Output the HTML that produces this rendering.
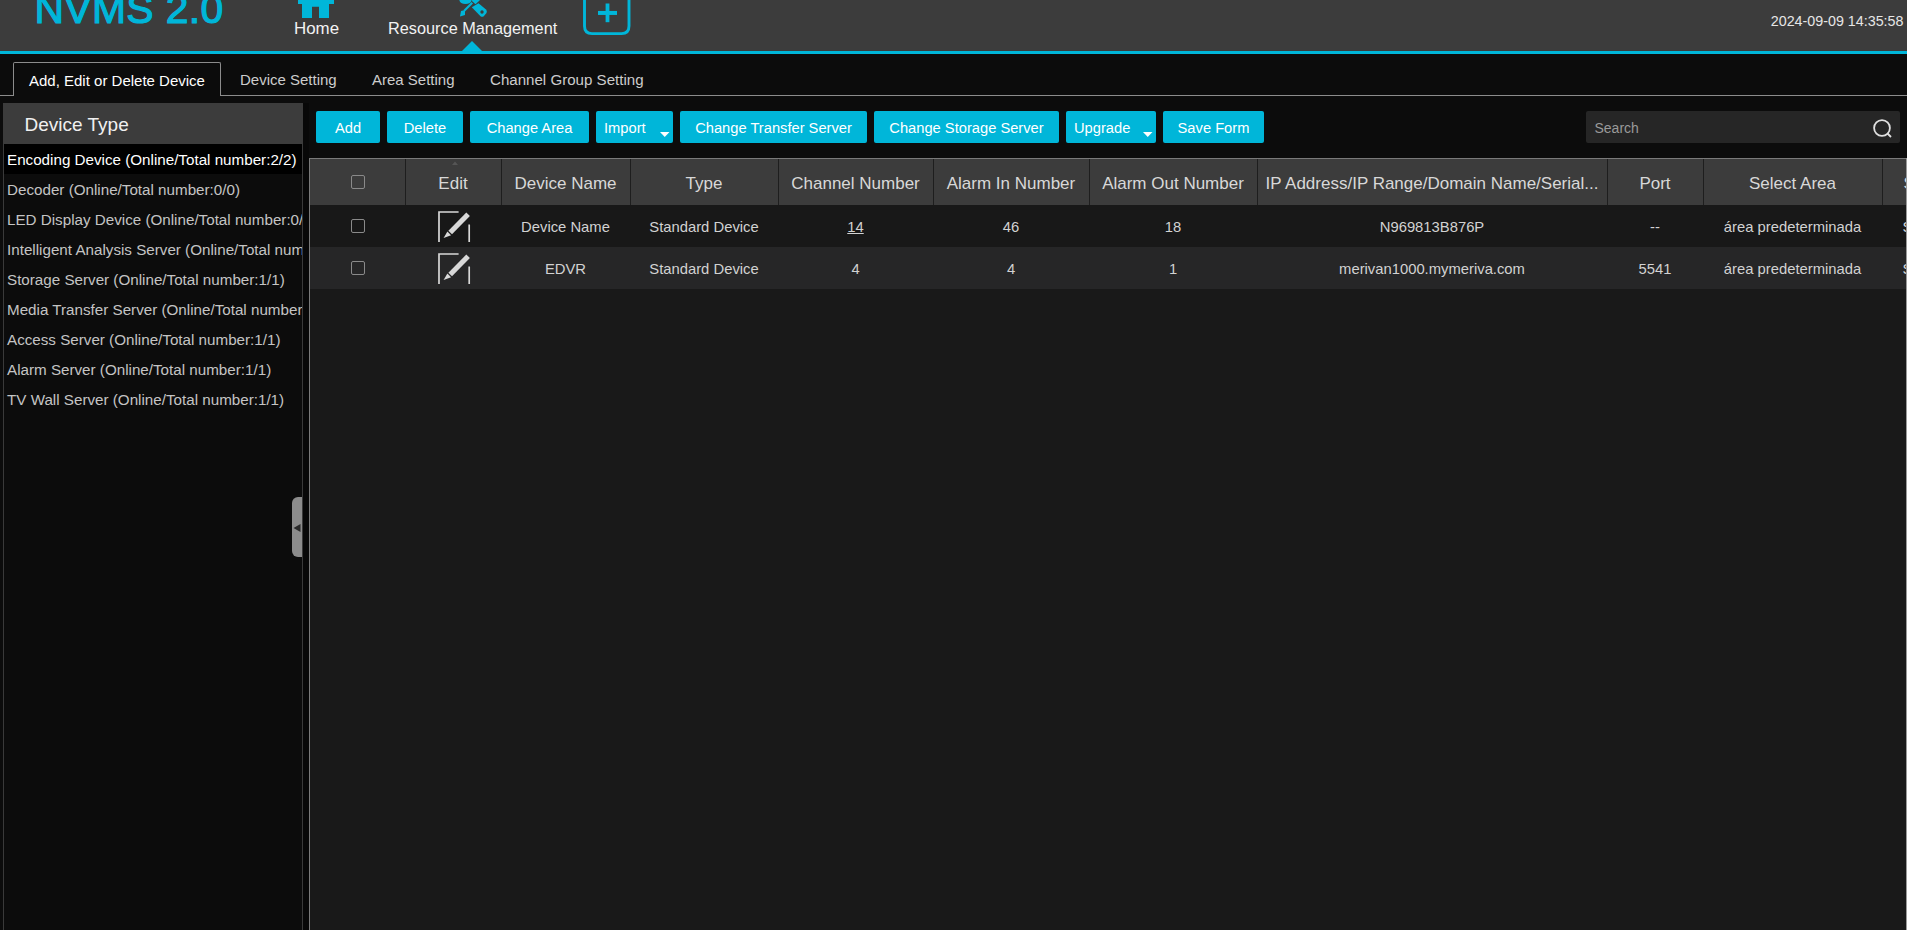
<!DOCTYPE html>
<html><head><meta charset="utf-8"><style>
html,body{margin:0;padding:0}
body{width:1907px;height:930px;position:relative;overflow:hidden;background:#0c0c0c;font-family:"Liberation Sans",sans-serif}
.t{position:absolute;white-space:nowrap;line-height:1}
</style></head><body>
<div style="position:absolute;left:0px;top:0px;width:1907px;height:51px;background:#3c3c3c"></div>
<div style="position:absolute;left:0px;top:51px;width:1907px;height:3px;background:#00b6d9"></div>
<div class="t" style="left:34.5px;top:-10.7px;font-size:40.8px;color:#00b6d9;-webkit-text-stroke:1.2px #00b6d9;letter-spacing:0.4px;">NVMS 2.0</div>
<svg style="position:absolute;left:0;top:0" width="700" height="54"><g fill="#00b6d9"><path d="M298 -6 L334 -6 L334 4 L329 4 L329 18 L319 18 L319 6.7 L312 6.7 L312 18 L302 18 L302 4 L298 4 Z"/><ellipse cx="465.5" cy="0.5" rx="6" ry="3.5"/><path d="M471.3 -1 L479.6 -1 L479.6 0.5 L475.5 4.2 L472.5 1.5 Z"/><path d="M471.5 2 L473 3.5 L465 11.5 L463.5 10 Z"/><path d="M460 16.5 L461 11 L465 10 L465 15 Z"/><path d="M471.8 7.3 L478.5 3.3 L486 9.5 Q487.5 11 486.5 13 L483.5 16.5 Q482 17.3 480.5 16.3 Z"/><path d="M462 51 L472 41 L482 51 Z"/></g><circle cx="482" cy="12" r="1.7" fill="#3c3c3c"/><path d="M584.5 -5 L584.5 26 Q584.5 33.6 592 33.6 L621.5 33.6 Q629 33.6 629 26 L629 -5" fill="none" stroke="#00b6d9" stroke-width="2.9"/><path d="M607.5 3.5 L607.5 22.2" stroke="#00b6d9" stroke-width="3.8"/><path d="M598 12.95 L617 12.95" stroke="#00b6d9" stroke-width="4"/></svg>
<div class="t" style="left:294px;top:20.7px;font-size:16.9px;color:#f2f2f2;">Home</div>
<div class="t" style="left:388px;top:20.1px;font-size:16.3px;color:#f2f2f2;">Resource Management</div>
<div class="t" style="right:3.5px;top:13.9px;font-size:14.3px;color:#e6e6e6;">2024-09-09 14:35:58</div>
<div style="position:absolute;left:0px;top:95px;width:13px;height:1px;background:#8c8c8c"></div>
<div style="position:absolute;left:221px;top:95px;width:1686px;height:1px;background:#8c8c8c"></div>
<div style="position:absolute;left:13px;top:62px;width:206px;height:33px;border:1px solid #8c8c8c;border-bottom:none;border-radius:2px 2px 0 0;background:#0c0c0c"></div>
<div class="t" style="left:29px;top:73.2px;font-size:15.0px;color:#ffffff;">Add, Edit or Delete Device</div>
<div class="t" style="left:240px;top:72.3px;font-size:15.0px;color:#cccccc;">Device Setting</div>
<div class="t" style="left:372px;top:72.3px;font-size:15.0px;color:#cccccc;">Area Setting</div>
<div class="t" style="left:490px;top:72.2px;font-size:15.1px;color:#cccccc;">Channel Group Setting</div>
<div style="position:absolute;left:3px;top:103px;width:300px;height:41px;background:#3c3c3c"></div>
<div style="position:absolute;left:3px;top:144px;width:1px;height:786px;background:#3a3a3a"></div>
<div style="position:absolute;left:302px;top:144px;width:1px;height:786px;background:#3a3a3a"></div>
<div style="position:absolute;left:303px;top:103px;width:6px;height:827px;background:#080808"></div>
<div style="position:absolute;left:4px;top:144px;width:298px;height:30px;background:#000000"></div>
<div class="t" style="left:24.5px;top:114.9px;font-size:19.0px;color:#f0f0f0;">Device Type</div>
<div style="position:absolute;left:4px;top:144px;width:298px;height:300px;overflow:hidden">
<div class="t" style="left:3px;top:7.6px;font-size:15.2px;color:#ffffff">Encoding Device (Online/Total number:2/2)</div>
<div class="t" style="left:3px;top:37.6px;font-size:15.2px;color:#c4c4c4">Decoder (Online/Total number:0/0)</div>
<div class="t" style="left:3px;top:67.6px;font-size:15.2px;color:#c4c4c4">LED Display Device (Online/Total number:0/0)</div>
<div class="t" style="left:3px;top:97.6px;font-size:15.2px;color:#c4c4c4">Intelligent Analysis Server (Online/Total number:0/0)</div>
<div class="t" style="left:3px;top:127.6px;font-size:15.2px;color:#c4c4c4">Storage Server (Online/Total number:1/1)</div>
<div class="t" style="left:3px;top:157.6px;font-size:15.2px;color:#c4c4c4">Media Transfer Server (Online/Total number:1/1)</div>
<div class="t" style="left:3px;top:187.6px;font-size:15.2px;color:#c4c4c4">Access Server (Online/Total number:1/1)</div>
<div class="t" style="left:3px;top:217.6px;font-size:15.2px;color:#c4c4c4">Alarm Server (Online/Total number:1/1)</div>
<div class="t" style="left:3px;top:247.6px;font-size:15.2px;color:#c4c4c4">TV Wall Server (Online/Total number:1/1)</div>
</div>
<div style="position:absolute;left:292px;top:497px;width:10px;height:60px;background:#8c8c8c;border-radius:6px 0 0 6px"></div>
<svg style="position:absolute;left:292px;top:497px" width="10" height="60"><path d="M293.5 528 L300.5 524 L300.5 532 Z" transform="translate(-292,-497)" fill="#2a2a2a"/></svg>
<div style="position:absolute;left:316px;top:111px;width:64px;height:32px;background:#00b6d9;border-radius:2px"></div>
<div class="t" style="left:316px;top:120.8px;width:64px;text-align:center;font-size:14.7px;color:#ffffff;">Add</div>
<div style="position:absolute;left:387px;top:111px;width:76px;height:32px;background:#00b6d9;border-radius:2px"></div>
<div class="t" style="left:387px;top:120.8px;width:76px;text-align:center;font-size:14.7px;color:#ffffff;">Delete</div>
<div style="position:absolute;left:470px;top:111px;width:119px;height:32px;background:#00b6d9;border-radius:2px"></div>
<div class="t" style="left:470px;top:120.8px;width:119px;text-align:center;font-size:14.7px;color:#ffffff;">Change Area</div>
<div style="position:absolute;left:596px;top:111px;width:77px;height:32px;background:#00b6d9;border-radius:2px"></div>
<div class="t" style="left:604px;top:120.8px;font-size:14.7px;color:#ffffff;">Import</div>
<svg style="position:absolute;left:659.5px;top:132px" width="10" height="6"><path d="M0 0 L9.5 0 L4.75 5 Z" fill="#ffffff"/></svg>
<div style="position:absolute;left:680px;top:111px;width:187px;height:32px;background:#00b6d9;border-radius:2px"></div>
<div class="t" style="left:680px;top:120.8px;width:187px;text-align:center;font-size:14.7px;color:#ffffff;">Change Transfer Server</div>
<div style="position:absolute;left:874px;top:111px;width:185px;height:32px;background:#00b6d9;border-radius:2px"></div>
<div class="t" style="left:874px;top:120.8px;width:185px;text-align:center;font-size:14.7px;color:#ffffff;">Change Storage Server</div>
<div style="position:absolute;left:1066px;top:111px;width:90px;height:32px;background:#00b6d9;border-radius:2px"></div>
<div class="t" style="left:1074px;top:120.8px;font-size:14.7px;color:#ffffff;">Upgrade</div>
<svg style="position:absolute;left:1142.5px;top:132px" width="10" height="6"><path d="M0 0 L9.5 0 L4.75 5 Z" fill="#ffffff"/></svg>
<div style="position:absolute;left:1163px;top:111px;width:101px;height:32px;background:#00b6d9;border-radius:2px"></div>
<div class="t" style="left:1163px;top:120.8px;width:101px;text-align:center;font-size:14.7px;color:#ffffff;">Save Form</div>
<div style="position:absolute;left:1586px;top:111px;width:314px;height:32px;background:#262626;border-radius:2px"></div>
<div class="t" style="left:1594.5px;top:120.9px;font-size:14.0px;color:#9a9a9a;">Search</div>
<svg style="position:absolute;left:1870px;top:116px" width="24" height="24"><circle cx="12" cy="12" r="7.9" fill="none" stroke="#e0e0e0" stroke-width="1.8"/><path d="M17.5 17.5 L21 21" stroke="#e0e0e0" stroke-width="1.8"/></svg>
<div style="position:absolute;left:309px;top:158px;width:1598px;height:772px;background:#191919"></div>
<div style="position:absolute;left:309px;top:158px;width:1598px;height:1px;background:#7a7a7a"></div>
<div style="position:absolute;left:309px;top:158px;width:1px;height:772px;background:#7a7a7a"></div>
<div style="position:absolute;left:310px;top:159px;width:1596px;height:46px;background:#3c3c3c"></div>
<div style="position:absolute;left:310px;top:205px;width:1596px;height:42px;background:#181818"></div>
<div style="position:absolute;left:310px;top:247px;width:1596px;height:42px;background:#262627"></div>
<div style="position:absolute;left:405px;top:159px;width:1px;height:46px;background:#1e1e1e"></div>
<div style="position:absolute;left:501px;top:159px;width:1px;height:46px;background:#1e1e1e"></div>
<div style="position:absolute;left:630px;top:159px;width:1px;height:46px;background:#1e1e1e"></div>
<div style="position:absolute;left:778px;top:159px;width:1px;height:46px;background:#1e1e1e"></div>
<div style="position:absolute;left:933px;top:159px;width:1px;height:46px;background:#1e1e1e"></div>
<div style="position:absolute;left:1089px;top:159px;width:1px;height:46px;background:#1e1e1e"></div>
<div style="position:absolute;left:1257px;top:159px;width:1px;height:46px;background:#1e1e1e"></div>
<div style="position:absolute;left:1607px;top:159px;width:1px;height:46px;background:#1e1e1e"></div>
<div style="position:absolute;left:1703px;top:159px;width:1px;height:46px;background:#1e1e1e"></div>
<div style="position:absolute;left:1882px;top:159px;width:1px;height:46px;background:#1e1e1e"></div>
<div class="t" style="left:405px;top:174.9px;width:96px;text-align:center;font-size:17.0px;color:#d8d8d8;">Edit</div>
<div class="t" style="left:501px;top:174.9px;width:129px;text-align:center;font-size:17.0px;color:#d8d8d8;">Device Name</div>
<div class="t" style="left:630px;top:174.9px;width:148px;text-align:center;font-size:17.0px;color:#d8d8d8;">Type</div>
<div class="t" style="left:778px;top:174.9px;width:155px;text-align:center;font-size:17.0px;color:#d8d8d8;">Channel Number</div>
<div class="t" style="left:933px;top:174.9px;width:156px;text-align:center;font-size:17.0px;color:#d8d8d8;">Alarm In Number</div>
<div class="t" style="left:1089px;top:174.9px;width:168px;text-align:center;font-size:17.0px;color:#d8d8d8;">Alarm Out Number</div>
<div class="t" style="left:1257px;top:174.9px;width:350px;text-align:center;font-size:17.0px;color:#d8d8d8;">IP Address/IP Range/Domain Name/Serial...</div>
<div class="t" style="left:1607px;top:174.9px;width:96px;text-align:center;font-size:17.0px;color:#d8d8d8;">Port</div>
<div class="t" style="left:1703px;top:174.9px;width:179px;text-align:center;font-size:17.0px;color:#d8d8d8;">Select Area</div>
<div class="t" style="left:1903.5px;top:174.9px;font-size:17px;color:#d8d8d8;">S</div>
<div class="t" style="left:501px;top:219.5px;width:129px;text-align:center;font-size:14.8px;color:#d2d2d2;">Device Name</div>
<div class="t" style="left:630px;top:219.5px;width:148px;text-align:center;font-size:14.8px;color:#d2d2d2;">Standard Device</div>
<div class="t" style="left:778px;top:219.5px;width:155px;text-align:center;font-size:14.8px;color:#d2d2d2;"><u>14</u></div>
<div class="t" style="left:933px;top:219.5px;width:156px;text-align:center;font-size:14.8px;color:#d2d2d2;">46</div>
<div class="t" style="left:1089px;top:219.5px;width:168px;text-align:center;font-size:14.8px;color:#d2d2d2;">18</div>
<div class="t" style="left:1257px;top:219.5px;width:350px;text-align:center;font-size:14.8px;color:#d2d2d2;">N969813B876P</div>
<div class="t" style="left:1607px;top:219.5px;width:96px;text-align:center;font-size:14.8px;color:#d2d2d2;">--</div>
<div class="t" style="left:1703px;top:219.5px;width:179px;text-align:center;font-size:14.8px;color:#d2d2d2;">área predeterminada</div>
<div class="t" style="left:1902.5px;top:219.5px;font-size:14.8px;color:#d8d8d8;">S</div>
<div class="t" style="left:501px;top:261.5px;width:129px;text-align:center;font-size:14.8px;color:#d2d2d2;">EDVR</div>
<div class="t" style="left:630px;top:261.5px;width:148px;text-align:center;font-size:14.8px;color:#d2d2d2;">Standard Device</div>
<div class="t" style="left:778px;top:261.5px;width:155px;text-align:center;font-size:14.8px;color:#d2d2d2;">4</div>
<div class="t" style="left:933px;top:261.5px;width:156px;text-align:center;font-size:14.8px;color:#d2d2d2;">4</div>
<div class="t" style="left:1089px;top:261.5px;width:168px;text-align:center;font-size:14.8px;color:#d2d2d2;">1</div>
<div class="t" style="left:1257px;top:261.5px;width:350px;text-align:center;font-size:14.8px;color:#d2d2d2;">merivan1000.mymeriva.com</div>
<div class="t" style="left:1607px;top:261.5px;width:96px;text-align:center;font-size:14.8px;color:#d2d2d2;">5541</div>
<div class="t" style="left:1703px;top:261.5px;width:179px;text-align:center;font-size:14.8px;color:#d2d2d2;">área predeterminada</div>
<div class="t" style="left:1902.5px;top:261.5px;font-size:14.8px;color:#d8d8d8;">S</div>
<div style="position:absolute;left:1906px;top:158px;width:1px;height:772px;background:#9a9a9a"></div>
<div style="position:absolute;left:351px;top:175px;width:12px;height:12px;border:1px solid #8a8a8a;border-radius:2px"></div>
<div style="position:absolute;left:351px;top:219px;width:12px;height:12px;border:1px solid #8a8a8a;border-radius:2px"></div>
<div style="position:absolute;left:351px;top:261px;width:12px;height:12px;border:1px solid #8a8a8a;border-radius:2px"></div>
<svg style="position:absolute;left:437px;top:211px" width="34" height="32"><g fill="none" stroke="#d8d8d8" stroke-width="1.7"><path d="M2 31 L2 1 L21.6 1"/><path d="M32.2 13.5 L32.2 31"/></g><path d="M32.9 5.0 L29.3 1.4 L11.4 19.7 L15.0 23.3 Z" fill="#d8d8d8"/><path d="M10.4 20.6 L14.1 24.3 L6.6 27.0 Z" fill="#d8d8d8"/></svg>
<svg style="position:absolute;left:437px;top:253px" width="34" height="32"><g fill="none" stroke="#d8d8d8" stroke-width="1.7"><path d="M2 31 L2 1 L21.6 1"/><path d="M32.2 13.5 L32.2 31"/></g><path d="M32.9 5.0 L29.3 1.4 L11.4 19.7 L15.0 23.3 Z" fill="#d8d8d8"/><path d="M10.4 20.6 L14.1 24.3 L6.6 27.0 Z" fill="#d8d8d8"/></svg>
<svg style="position:absolute;left:451.5px;top:160.5px" width="6" height="4"><path d="M0 4 L3 0.5 L6 4 Z" fill="#555"/></svg>
</body></html>
